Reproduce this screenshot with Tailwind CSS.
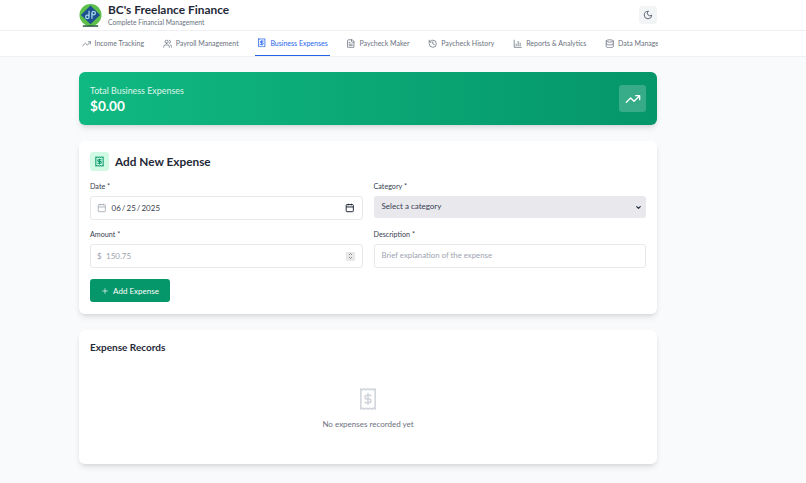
<!DOCTYPE html>
<html lang="en">
<head>
    <meta charset="UTF-8">
    <meta name="viewport" content="width=device-width, initial-scale=1.0">
    <title>BC's Freelance Finance</title>
    <script src="https://cdn.jsdelivr.net/npm/@tailwindcss/browser@4"></script>
</head>
<body class="bg-[#f9fafb] h-[483px] overflow-hidden font-['Lato',sans-serif] text-[#1f2937]">

    <!-- Header -->
    <header class="bg-white h-[31px] border-b border-[#eef0f3] pl-[79px] pr-[149px] flex items-center justify-between">
        <div class="flex items-center gap-[6px]">
            <svg class="w-[23px] h-[23px]" viewBox="0 0 24 24">
                <circle cx="12" cy="11.500" r="11.500" fill="#5cc04a"/>
                <path d="M12 1.500 L22 11.500 L12 21 L2 11.500 Z" fill="#1d4f91"/>
                <path d="M10.500 7v6.500a1.800 1.800 0 1 1-3.600 0 1.800 1.800 0 1 1 3.600 0M13.500 15.500V9.500a1.800 1.800 0 1 1 3.600 0 1.800 1.800 0 1 1-3.600 0" fill="none" stroke="#a7dcea" stroke-width="1.300"/>
                <path d="M4 23h16" stroke="#14532d" stroke-width="1.500"/>
            </svg>
            <div>
                <h1 class="text-[11.900px] leading-[14px] font-bold text-[#1f2937]">BC's Freelance Finance</h1>
                <p class="text-[6.700px] leading-[9px] mt-[1px] text-[#6b7280]">Complete Financial Management</p>
            </div>
        </div>
        <button class="w-[18px] h-[18px] rounded-[3px] bg-[#f3f4f6] flex items-center justify-center">
            <svg class="w-[10px] h-[10px]" fill="none" viewBox="0 0 24 24" stroke="#4b5563" stroke-width="2">
                <path stroke-linecap="round" stroke-linejoin="round" d="M12 3a6 6 0 0 0 9 9 9 9 0 1 1-9-9Z"/>
            </svg>
        </button>
    </header>

    <!-- Tabs -->
    <nav class="bg-white h-[26px] border-b border-[#eef0f3] pl-[79px] w-full">
        <div class="w-[579px] h-full overflow-hidden flex gap-[14.200px] text-[7px] text-[#6b7280]">
            <a class="flex items-center gap-[3.500px] pl-[2.500px] pr-[2px] h-full shrink-0">
                <svg class="w-[9.500px] h-[9.500px]" fill="none" viewBox="0 0 24 24" stroke="currentColor" stroke-width="2"><path stroke-linecap="round" stroke-linejoin="round" d="M22 7l-8.500 8.500-5-5L2 17M16 7h6v6"/></svg>
                Income Tracking
            </a>
            <a class="flex items-center gap-[3.500px] pl-[2.500px] pr-[2px] h-full shrink-0">
                <svg class="w-[9.500px] h-[9.500px]" fill="none" viewBox="0 0 24 24" stroke="currentColor" stroke-width="2"><path stroke-linecap="round" stroke-linejoin="round" d="M16 21v-2a4 4 0 0 0-4-4H6a4 4 0 0 0-4 4v2M9 11a4 4 0 1 0 0-8 4 4 0 0 0 0 8ZM22 21v-2a4 4 0 0 0-3-3.870M16 3.130a4 4 0 0 1 0 7.750"/></svg>
                Payroll Management
            </a>
            <a class="flex items-center gap-[3.500px] pl-[2.500px] pr-[2px] h-full shrink-0 text-[#2563eb] border-b border-[#2563eb]">
                <svg class="w-[9.500px] h-[9.500px]" fill="none" viewBox="0 0 24 24" stroke="currentColor" stroke-width="2"><path stroke-linecap="round" stroke-linejoin="round" d="M4 2v20l2-1 2 1 2-1 2 1 2-1 2 1 2-1 2 1V2l-2 1-2-1-2 1-2-1-2 1-2-1-2 1ZM16 8h-6a2 2 0 1 0 0 4h4a2 2 0 1 1 0 4H8M12 17.500v-11"/></svg>
                Business Expenses
            </a>
            <a class="flex items-center gap-[3.500px] pl-[2.500px] pr-[2px] h-full shrink-0">
                <svg class="w-[9.500px] h-[9.500px]" fill="none" viewBox="0 0 24 24" stroke="currentColor" stroke-width="2"><path stroke-linecap="round" stroke-linejoin="round" d="M15 2H6a2 2 0 0 0-2 2v16a2 2 0 0 0 2 2h12a2 2 0 0 0 2-2V7ZM14 2v4a2 2 0 0 0 2 2h4M10 9H8M16 13H8M16 17H8"/></svg>
                Paycheck Maker
            </a>
            <a class="flex items-center gap-[3.500px] pl-[2.500px] pr-[2px] h-full shrink-0">
                <svg class="w-[9.500px] h-[9.500px]" fill="none" viewBox="0 0 24 24" stroke="currentColor" stroke-width="2"><path stroke-linecap="round" stroke-linejoin="round" d="M3 12a9 9 0 1 0 9-9 9.750 9.750 0 0 0-6.740 2.740L3 8M3 3v5h5M12 7v5l4 2"/></svg>
                Paycheck History
            </a>
            <a class="flex items-center gap-[3.500px] pl-[2.500px] pr-[2px] h-full shrink-0">
                <svg class="w-[9.500px] h-[9.500px]" fill="none" viewBox="0 0 24 24" stroke="currentColor" stroke-width="2"><path stroke-linecap="round" stroke-linejoin="round" d="M3 3v18h18M8 17v-4M13 17V6M18 17V10"/></svg>
                Reports &amp; Analytics
            </a>
            <a class="flex items-center gap-[3.500px] pl-[2.500px] pr-[2px] h-full shrink-0">
                <svg class="w-[9.500px] h-[9.500px]" fill="none" viewBox="0 0 24 24" stroke="currentColor" stroke-width="2"><ellipse cx="12" cy="5" rx="9" ry="3"/><path stroke-linecap="round" stroke-linejoin="round" d="M3 5v14c0 1.660 4 3 9 3s9-1.340 9-3V5M3 12c0 1.660 4 3 9 3s9-1.340 9-3"/></svg>
                Data Management
            </a>
        </div>
    </nav>

    <main class="w-[578px] ml-[79px] pt-[15px] flex flex-col gap-[16px]">

        <!-- Total banner -->
        <section class="h-[53px] rounded-[6px] bg-gradient-to-r from-[#10b981] to-[#059669] shadow-md px-[11px] flex items-center justify-between text-white">
            <div class="pt-[1px]">
                <p class="text-[8.900px] leading-[13px] text-white/85">Total Business Expenses</p>
                <p class="text-[13.600px] leading-[18px] font-bold">$0.00</p>
            </div>
            <div class="w-[27px] h-[27px] rounded-[3px] bg-white/20 flex items-center justify-center">
                <svg class="w-[16px] h-[16px]" fill="none" viewBox="0 0 24 24" stroke="currentColor" stroke-width="2"><path stroke-linecap="round" stroke-linejoin="round" d="M22 7l-8.500 8.500-5-5L2 17M16 7h6v6"/></svg>
            </div>
        </section>

        <!-- Add expense form -->
        <section class="h-[173px] rounded-[6px] bg-white shadow-md p-[11px]">
            <div class="flex items-center gap-[6px] h-[19px] mb-[10px]">
                <div class="w-[19px] h-[19px] rounded-[3px] bg-[#d1fae5] flex items-center justify-center">
                    <svg class="w-[11px] h-[11px]" fill="none" viewBox="0 0 24 24" stroke="#059669" stroke-width="2.200"><path stroke-linecap="round" stroke-linejoin="round" d="M4 2v20l2-1 2 1 2-1 2 1 2-1 2 1 2-1 2 1V2l-2 1-2-1-2 1-2-1-2 1-2-1-2 1ZM16 8h-6a2 2 0 1 0 0 4h4a2 2 0 1 1 0 4H8M12 17.500v-11"/></svg>
                </div>
                <h2 class="text-[11.800px] font-bold text-[#1f2937]">Add New Expense</h2>
            </div>
            <div class="grid grid-cols-2 gap-x-[11px] gap-y-[9px] text-[#374151]">
                <div>
                    <label class="block text-[7.200px] leading-[12px] mb-[3px]">Date *</label>
                    <div class="h-[24px] rounded-[3px] border border-[#e5e7eb] px-[6px] flex items-center text-[8px]">
                        <svg class="w-[9.500px] h-[9.500px] text-[#9ca3af] mr-[5px]" fill="none" viewBox="0 0 24 24" stroke="currentColor" stroke-width="2"><rect x="3" y="4" width="18" height="18" rx="2"/><path d="M16 2v4M8 2v4M3 10h18"/></svg>
                        <span class="[word-spacing:-1px]">06 / 25 / 2025</span>
                        <svg class="w-[9.500px] h-[9.500px] ml-auto mr-[1px] text-[#1f2937]" fill="none" viewBox="0 0 24 24" stroke="currentColor" stroke-width="2.500"><rect x="3" y="4" width="18" height="18" rx="2"/><path d="M16 2v4M8 2v4M3 10h18"/></svg>
                    </div>
                </div>
                <div>
                    <label class="block text-[7.200px] leading-[12px] mb-[3px]">Category *</label>
                    <div class="h-[22px] rounded-[3px] bg-[#e8e8ed] px-[8px] pb-[2px] flex items-center justify-between text-[8px]">
                        Select a category
                        <svg class="w-[7px] h-[7px] -mr-[4px] mt-[2px]" fill="none" viewBox="0 0 24 24" stroke="#1f2937" stroke-width="4"><path stroke-linecap="round" stroke-linejoin="round" d="M6 9l6 6 6-6"/></svg>
                    </div>
                </div>
                <div>
                    <label class="block text-[7.200px] leading-[12px] mb-[3px]">Amount *</label>
                    <div class="h-[24px] rounded-[3px] border border-[#e5e7eb] pl-[6px] pr-[7px] flex items-center text-[8px] text-[#9ca3af]">
                        <span class="w-[9px]">$</span>
                        <span>150.75</span>
                        <span class="ml-auto w-[9px] h-[9px] rounded-[1px] bg-[#e8e8e8] flex flex-col items-center justify-center">
                            <svg class="w-[5px] h-[4px]" fill="none" viewBox="0 0 10 8" stroke="#6b7280" stroke-width="1.500"><path d="M2 6l3-3 3 3"/></svg>
                            <svg class="w-[5px] h-[4px]" fill="none" viewBox="0 0 10 8" stroke="#6b7280" stroke-width="1.500"><path d="M2 2l3 3 3-3"/></svg>
                        </span>
                    </div>
                </div>
                <div>
                    <label class="block text-[7.200px] leading-[12px] mb-[3px]">Description *</label>
                    <div class="h-[24px] rounded-[3px] border border-[#e5e7eb] px-[7px] flex items-center text-[7.800px] text-[#9ca3af]">Brief explanation of the expense</div>
                </div>
            </div>
            <button class="mt-[11px] w-[80px] h-[23px] rounded-[3px] bg-[#059669] text-white text-[8px] flex items-center justify-center gap-[4px]">
                <svg class="w-[8px] h-[8px]" fill="none" viewBox="0 0 24 24" stroke="currentColor" stroke-width="2"><path stroke-linecap="round" d="M5 12h14M12 5v14"/></svg>
                Add Expense
            </button>
        </section>

        <!-- Records -->
        <section class="h-[134px] rounded-[6px] bg-white shadow-md px-[11px] pt-[11px]">
            <h2 class="text-[10px] leading-[13px] font-bold text-[#1f2937]">Expense Records</h2>
            <div class="mt-[34px] flex flex-col items-center">
                <svg class="w-[16px] h-[22px]" fill="none" viewBox="0 0 19 24" preserveAspectRatio="none" stroke="#d1d5db" stroke-width="1.800"><path stroke-linejoin="round" d="M1 1v22l2.100-1 2.200 1 2-1 2.200 1 2.200-1 2 1 2.200-1 2.100 1V1l-2.100 1-2.200-1-2 1-2.200-1-2.200 1-2-1-2.200 1Z"/><path stroke-linecap="round" d="M13 8H8a2 2 0 1 0 0 4h3a2 2 0 1 1 0 4H6M9.500 6v12"/></svg>
                <p class="mt-[9px] text-[8px] leading-[10px] text-[#6b7280]">No expenses recorded yet</p>
            </div>
        </section>
    </main>
</body>
</html>
